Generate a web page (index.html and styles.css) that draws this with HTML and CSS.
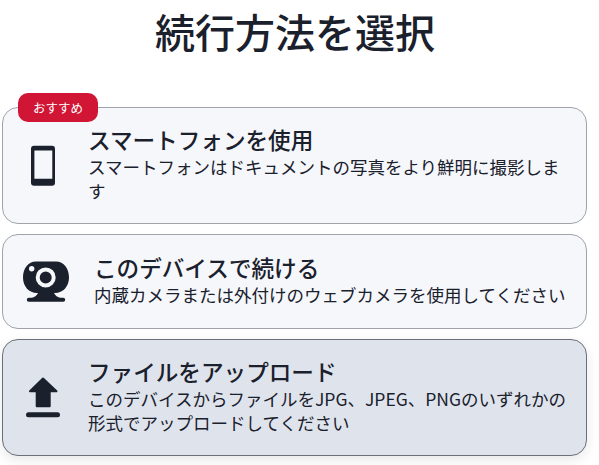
FILE: index.html
```html
<!DOCTYPE html>
<html lang="ja">
<head>
<meta charset="utf-8">
<title>続行方法を選択</title>
<link rel="stylesheet" href="styles.css">
</head>
<body>
<h1 class="heading">続行方法を選択</h1>
<div class="list">
  <div class="card card-tall">
    <span class="badge">おすすめ</span>
    <svg class="icon" viewBox="0 0 48 48"><path fill="#1a202c" fill-rule="evenodd" d="M15 4.700h18a3 3 0 0 1 3 3v34a3 3 0 0 1-3 3H15a3 3 0 0 1-3-3v-34a3 3 0 0 1 3-3zm.4 4.700v28.300h17.900V9.400z"/></svg>
    <div class="text">
      <div class="title">スマートフォンを使用</div>
      <div class="desc">スマートフォンはドキュメントの写真をより鮮明に撮影します</div>
    </div>
  </div>
  <div class="card card-short">
    <svg class="icon icon-wide" viewBox="0 0 54 48"><path fill="#1a202c" fill-rule="evenodd" d="M17 3.500h20c8 0 13 7 13 16s-6 15.500-14 15.500h-1c1 2.200 3 4.200 6 4.700h3.200a2 2 0 0 1 0 4H9.800a2 2 0 0 1 0-4H13c3-.5 5-2.500 6-4.700h-1c-8 0-14-6.500-14-15.500s5-16 13-16zm9.700 5.900a10 10 0 1 0 0 20 10 10 0 0 0 0-20zm0 4a6 6 0 1 1 0 12 6 6 0 0 1 0-12zM12.700 8a2.700 2.700 0 1 0 0 5.400 2.700 2.700 0 0 0 0-5.400z"/></svg>
    <div class="text">
      <div class="title">このデバイスで続ける</div>
      <div class="desc">内蔵カメラまたは外付けのウェブカメラを使用してください</div>
    </div>
  </div>
  <div class="card card-tall card-active">
    <svg class="icon" viewBox="0 0 48 48"><path fill="#1a202c" stroke="#1a202c" stroke-width="2" stroke-linejoin="round" d="M24 4.500 37.500 17.300H30.700V32.300H17.700V17.300H11z"/><rect x="7" y="38.300" width="34" height="5" rx="2.500" fill="#1a202c"/></svg>
    <div class="text">
      <div class="title">ファイルをアップロード</div>
      <div class="desc">このデバイスからファイルをJPG、JPEG、PNGのいずれかの形式でアップロードしてください</div>
    </div>
  </div>
</div>
</body>
</html>
```
FILE: styles.css
```css
* { box-sizing: border-box; }
html, body { margin: 0; height: 465px; overflow: hidden; background: #fff; }
body {
  font-family: "Noto Sans CJK JP", "Noto Sans", sans-serif;
  color: #1a202c;
  width: 599px;
}
.heading {
  margin: 0;
  height: 107.3px;
  padding-top: 3px;
  padding-right: 9px;
  font-size: 40px;
  line-height: 56px;
  font-weight: 500;
  text-align: center;
}
.list {
  display: flex;
  flex-direction: column;
  gap: 10.6px;
  margin-left: 2px;
  width: 585px;
}
.card {
  position: relative;
  display: flex;
  align-items: center;
  padding: 0 12px 0 16px;
  gap: 21px;
  background: #f5f7fb;
  border: 1px solid #a0a4aa;
  border-radius: 16px;
}
.card-tall { height: 116.4px; }
.card-short { height: 94.6px; }
.card-active {
  background: #dfe4ec;
  border-color: #6b7078;
  box-shadow: 0 4px 12px rgba(26, 32, 44, .1);
}
.badge {
  position: absolute;
  left: 15px;
  top: -15px;
  height: 29px;
  width: 80px;
  border-radius: 10px;
  background: #d11534;
  color: #fff;
  font-size: 12.5px;
  line-height: 29px;
  text-align: center;
}
.icon { width: 48px; height: 48px; flex: none; }
.icon-wide { width: 54px; }
.text { flex: 1; min-width: 0; padding-bottom: 4px; }
.title { font-size: 22.6px; line-height: 31px; font-weight: 500; }
.desc { font-size: 17.5px; line-height: 23.8px; }
```
